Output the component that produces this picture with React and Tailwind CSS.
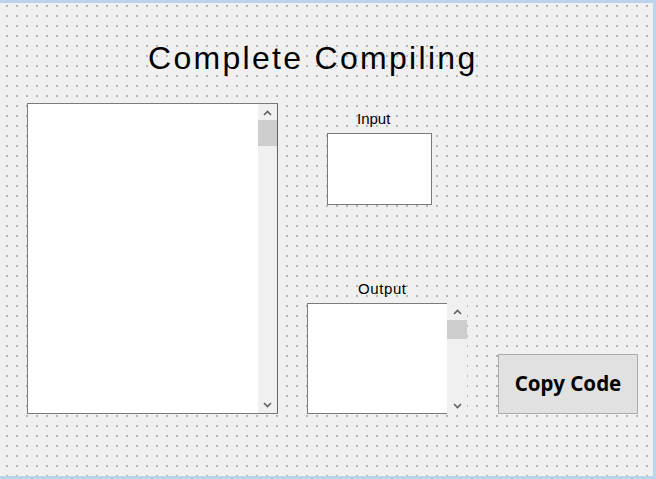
const dots =
  "bg-[#f0f0f0] bg-[radial-gradient(circle_at_7px_3px,#b4b4b4_0.8px,transparent_1px)] bg-[length:10px_10px]";

function Chevron({ up }) {
  return (
    <svg width="9" height="6" viewBox="0 0 9 6" className="block">
      <path
        d={up ? "M1 5 L4.5 1.5 L8 5" : "M1 1 L4.5 4.5 L8 1"}
        fill="none"
        stroke="#606060"
        strokeWidth="1.6"
      />
    </svg>
  );
}

function ScrollBar({ thumbTop, thumbH, className }) {
  return (
    <div className={"relative flex flex-col items-center bg-[#f0f0f0] " + className}>
      <div className="mt-[6px]">
        <Chevron up />
      </div>
      <div
        className="absolute left-0 right-0 bg-[#cdcdcd]"
        style={{ top: thumbTop, height: thumbH }}
      />
      <div className="mt-auto mb-[5px]">
        <Chevron />
      </div>
    </div>
  );
}

export default function App() {
  return (
    <div
      className={
        "w-[656px] h-[479px] box-border border-t-[3px] border-r-[3px] border-b-[3px] border-[#bcd3ec] " +
        dots
      }
      style={{ fontFamily: "'Liberation Sans', Arial, sans-serif" }}
    >
      <h1 className="mt-[39px] ml-[148px] text-[32px] leading-none tracking-[2.3px] text-black h-[32px]">
        Complete Compiling
      </h1>

      <div className="mt-[29px] flex h-[311px]">
        {/* code box */}
        <div className="ml-[27px] w-[251px] h-[311px] flex border-t border-l border-b border-r border-t-[#7a7a7a] border-l-[#7a7a7a] border-b-[#7a7a7a] border-r-[#646464]">
          <div className="flex-1 bg-white" />
          <ScrollBar thumbTop={16} thumbH={26} className="w-[19px]" />
        </div>

        {/* input / output */}
        <div className="ml-[29px] w-[160px] flex flex-col">
          <div className="mt-[8px] ml-[50px] text-[15px] leading-none h-[15px] text-black">Input</div>
          <div className="mt-[7px] ml-[20px] w-[105px] h-[72px] bg-white border border-[#7a7a7a]" />
          <div className="mt-[76px] ml-[51px] text-[15px] leading-none h-[15px] tracking-[0.6px] text-black">
            Output
          </div>
          <div className="mt-[7px] flex h-[111px]">
            <div className="w-[140px] h-[111px] bg-white border-t border-l border-b border-[#7a7a7a]" />
            <ScrollBar thumbTop={17} thumbH={19} className="w-[20px] h-[111px]" />
          </div>
        </div>

        {/* button */}
        <button
          className="self-end ml-[31px] w-[140px] h-[60px] bg-[#e1e1e1] border border-[#adadad] text-[20.5px] font-bold text-black flex items-center justify-center pb-[1px]"
          style={{ fontFamily: "'Noto Sans', 'Noto Sans CJK KR', sans-serif" }}
        >
          Copy Code
        </button>
      </div>
    </div>
  );
}
